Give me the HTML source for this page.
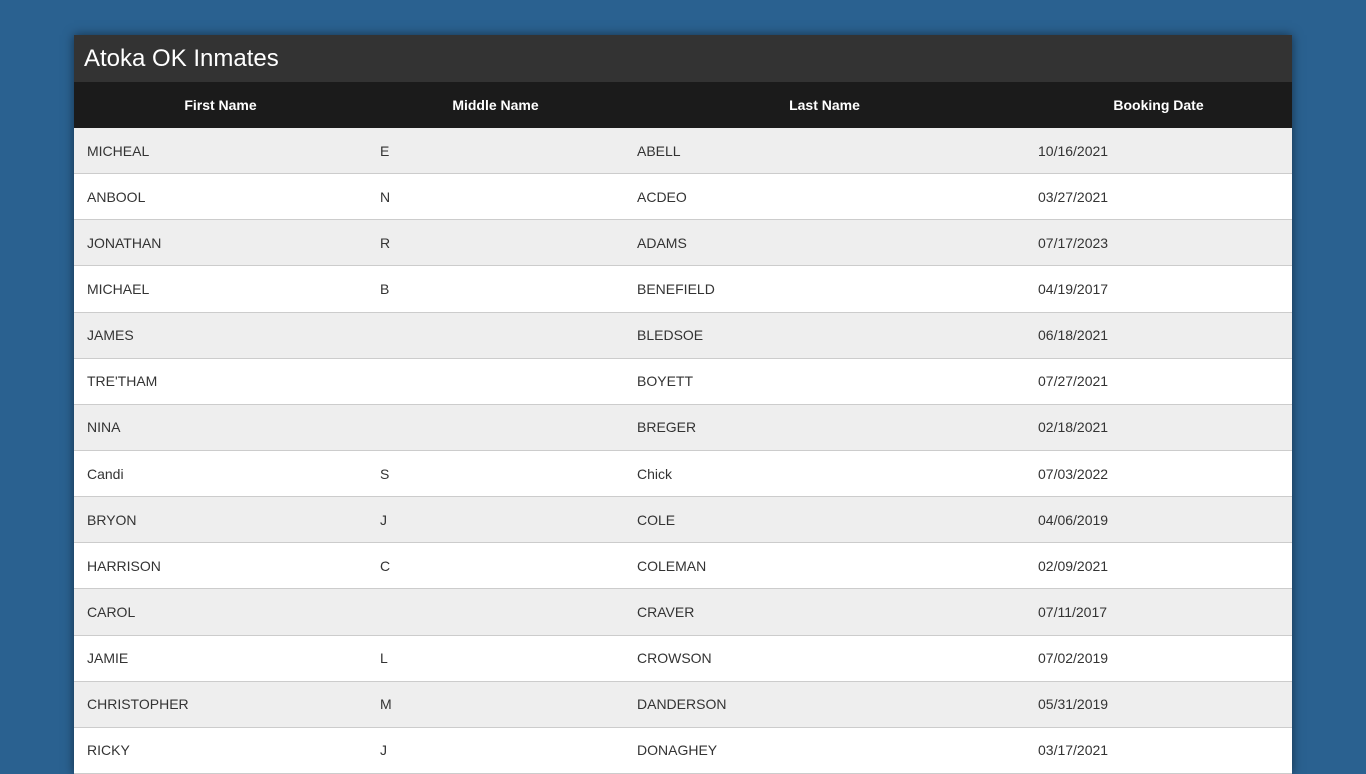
<!DOCTYPE html>
<html><head><style>
body{margin:0;background:#2a6190;font-family:"Liberation Sans",Arial,sans-serif;height:768px;overflow:hidden}
.box{position:absolute;left:74px;top:35px;width:1218px;background:#fff;box-shadow:0 0 10px rgba(0,0,0,.5)}
h1{margin:0;height:47px;background:#333;color:#fff;font-weight:normal;font-size:24px;line-height:47px;padding-left:10px;font-family:"Liberation Sans",Arial,sans-serif}
table{border-collapse:collapse;width:1218px;table-layout:fixed}
th{background:#1b1b1b;color:#fff;font-size:14px;height:46px;padding:0;text-align:center}
td{height:45.15px;padding:0 0 0 13px;font-size:14px;color:#333;border-bottom:1px solid #ccc}
tr:nth-child(even) td{background:#eee}
</style></head><body>
<div class="box"><h1>Atoka OK Inmates</h1>
<table><colgroup><col style="width:293px"><col style="width:257px"><col style="width:401px"><col style="width:267px"></colgroup>
<tr><th>First Name</th><th>Middle Name</th><th>Last Name</th><th>Booking Date</th></tr>
<tr><td>MICHEAL</td><td>E</td><td>ABELL</td><td>10/16/2021</td></tr>
<tr><td>ANBOOL</td><td>N</td><td>ACDEO</td><td>03/27/2021</td></tr>
<tr><td>JONATHAN</td><td>R</td><td>ADAMS</td><td>07/17/2023</td></tr>
<tr><td>MICHAEL</td><td>B</td><td>BENEFIELD</td><td>04/19/2017</td></tr>
<tr><td>JAMES</td><td></td><td>BLEDSOE</td><td>06/18/2021</td></tr>
<tr><td>TRE'THAM</td><td></td><td>BOYETT</td><td>07/27/2021</td></tr>
<tr><td>NINA</td><td></td><td>BREGER</td><td>02/18/2021</td></tr>
<tr><td>Candi</td><td>S</td><td>Chick</td><td>07/03/2022</td></tr>
<tr><td>BRYON</td><td>J</td><td>COLE</td><td>04/06/2019</td></tr>
<tr><td>HARRISON</td><td>C</td><td>COLEMAN</td><td>02/09/2021</td></tr>
<tr><td>CAROL</td><td></td><td>CRAVER</td><td>07/11/2017</td></tr>
<tr><td>JAMIE</td><td>L</td><td>CROWSON</td><td>07/02/2019</td></tr>
<tr><td>CHRISTOPHER</td><td>M</td><td>DANDERSON</td><td>05/31/2019</td></tr>
<tr><td>RICKY</td><td>J</td><td>DONAGHEY</td><td>03/17/2021</td></tr>
</table></div>
</body></html>
